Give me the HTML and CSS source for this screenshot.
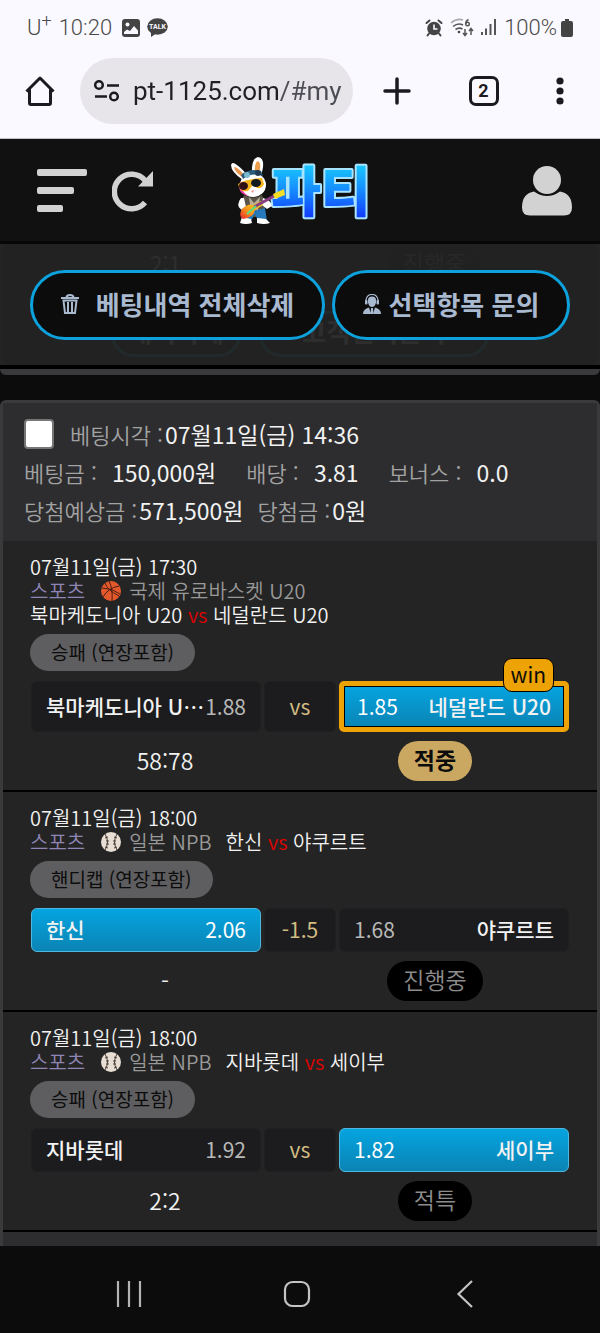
FILE: index.html
```html
<!DOCTYPE html>
<html lang="ko">
<head>
    <meta charset="UTF-8">
    <meta name="viewport" content="width=device-width, initial-scale=1.0">
    <title>파티</title>
    <link rel="stylesheet" href="styles.css">
</head>
<body>
    <div class="status-bar">
        <div class="status-left">
            <span>U<sup>+</sup></span>
            <span>10:20</span>
            <svg class="status-photo" width="18" height="18" viewBox="0 0 18 18"><rect width="18" height="18" rx="3" fill="#444"/><circle cx="5.500" cy="5.500" r="2" fill="#faf9ff"/><path d="M2 15v-2l3-2.500 3 1.500 4-5 4 4.500V15z" fill="#faf9ff"/></svg>
            <svg width="21" height="20" viewBox="0 0 21 20"><ellipse cx="10.500" cy="8.500" rx="10.300" ry="8.200" fill="#444"/><path d="M4 14l0 5 6-4z" fill="#444"/><text x="10.500" y="11" text-anchor="middle" font-size="7" font-weight="bold" font-family="Roboto, sans-serif" fill="#faf9ff">TALK</text></svg>
        </div>
        <div class="status-right">
            <svg width="18" height="18" viewBox="0 0 18 18"><circle cx="9" cy="9.500" r="6.800" fill="#444"/><path d="M1.500 4L4.500 1.500M16.500 4L13.500 1.500M4 14.500l-1.500 2M14 14.500l1.500 2" stroke="#444" stroke-width="2" stroke-linecap="round"/><path d="M9 5.500v4.500h3.500" fill="none" stroke="#faf9ff" stroke-width="1.600"/></svg>
            <svg width="24" height="19" viewBox="0 0 24 19" fill="none" stroke="#555"><path d="M1 5Q7 0 13 2" stroke="#aaa" stroke-width="1.600"/><path d="M3 8.500Q8 4.500 13 7M5.500 11.500Q9 9 12.500 11" stroke-width="1.600"/><circle cx="9" cy="14" r="1.300" fill="#444" stroke="none"/><path d="M18.500 1.500Q15.500 3 15.800 6" stroke-width="1.500"/><circle cx="17.500" cy="6" r="1.800" stroke-width="1.400"/><path d="M15 11v6M13 15l2 2.500 2-2.500M21 17v-6M19 13l2-2.500 2 2.500" stroke-width="1.500"/></svg>
            <svg width="16" height="17" viewBox="0 0 16 17" fill="#555"><rect y="13" width="2" height="3"/><rect x="4" y="9.500" width="2" height="6.500"/><rect x="8.500" y="5" width="2" height="11"/><rect x="13" width="2" height="16"/></svg>
            <span class="battery">100%</span>
            <svg width="12" height="18" viewBox="0 0 12 18"><path d="M4 0h4v2h2a2 2 0 0 1 2 2v12a2 2 0 0 1-2 2H2a2 2 0 0 1-2-2V4a2 2 0 0 1 2-2h2z" fill="#444"/></svg>
        </div>
    </div>

    <div class="browser-bar">
        <button class="icon-button" aria-label="홈"><svg width="30" height="30" viewBox="0 0 30 30" fill="none" stroke="#1b1b1f" stroke-width="3" stroke-linejoin="round"><path d="M1.500 15.500L15 2l13.500 13.500M4.500 13.500V27a1.500 1.500 0 0 0 1.500 1.500h18a1.500 1.500 0 0 0 1.500-1.500V13.500"/></svg></button>
        <div class="address">
            <svg width="26" height="22" viewBox="0 0 26 22" fill="none" stroke="#1b1b1f" stroke-width="2.500"><circle cx="5" cy="5" r="3.800"/><path d="M13 5.500h12M1 16.500h12"/><circle cx="20" cy="16.500" r="3.800"/></svg>
            <input type="text" class="address-input" aria-label="주소" value="pt-1125.com/#my">
        </div>
        <div class="browser-actions">
            <button class="icon-button" aria-label="새 탭"><svg width="28" height="28" viewBox="0 0 28 28" stroke="#1b1b1f" stroke-width="3.500" stroke-linecap="round"><path d="M14 2v24M2 14h24"/></svg></button>
            <button class="tab-count">2</button>
            <button class="icon-button" aria-label="메뉴"><svg width="8" height="28" viewBox="0 0 8 28" fill="#1b1b1f"><circle cx="4" cy="4" r="3.600"/><circle cx="4" cy="14" r="3.600"/><circle cx="4" cy="24" r="3.600"/></svg></button>
        </div>
    </div>

    <header class="site-header">
        <div class="header-left">
            <button class="icon-button" aria-label="전체메뉴"><svg width="50" height="44" viewBox="0 0 50 44" fill="#d2d2d2"><rect width="50" height="7" rx="2"/><rect y="18" width="37" height="7" rx="2"/><rect y="36" width="26" height="7" rx="2"/></svg></button>
            <button class="icon-button" aria-label="새로고침"><svg width="41" height="41" viewBox="0 0 41 41"><path d="M33 9.500A17.300 17.300 0 1 0 33 31.500" fill="none" stroke="#d2d2d2" stroke-width="5.500"/><path d="M41 0v15.500H26z" fill="#d2d2d2"/></svg></button>
        </div>
        <a href="#" class="logo">
            <svg width="142" height="70" viewBox="0 0 142 70">
                <defs>
                    <linearGradient id="logoBlue" x1="0" y1="0" x2="0" y2="1">
                        <stop offset="0.200" stop-color="#19c8ff"/>
                        <stop offset="0.500" stop-color="#1690ff"/>
                        <stop offset="0.850" stop-color="#123ffc"/>
                    </linearGradient>
                    <linearGradient id="guitar" x1="0" y1="1" x2="1" y2="0">
                        <stop offset="0" stop-color="#e7262b"/>
                        <stop offset="0.400" stop-color="#f7931e"/>
                        <stop offset="1" stop-color="#f5ec22"/>
                    </linearGradient>
                </defs>
                <text class="logo-text" x="92" y="56" text-anchor="middle" fill="url(#logoBlue)">파티</text>
                <!-- ears -->
                <path d="M14 24Q2 16 2 9q1-4 6 0 8 6 11 12z" fill="#fff"/>
                <path d="M13 21Q5 15 5 11q4 0 11 9z" fill="#e8954f"/>
                <path d="M23 20Q22 2 29 1q6 1 5 10-1 8-5 12z" fill="#fff"/>
                <path d="M26 19Q25 6 29 5q3 2 2 8-1 5-3 8z" fill="#ee9c4c"/>
                <!-- head -->
                <ellipse cx="24" cy="29" rx="13" ry="12" fill="#fff"/>
                <path d="M12 25Q12 37 20 40q-9-1-10-9z" fill="#ee3fa6"/>
                <path d="M12 19q8-7 20-4l2 5q-11-4-20 3z" fill="#2b5c77"/>
                <circle cx="18" cy="19" r="3" fill="#79b8ce"/><circle cx="29" cy="17" r="3" fill="#223b55"/>
                <path d="M9 28q8-5 24-6l2 6q-2 5-7 4l-4-3-5 6q-8 2-10-7z" fill="#f4b41c"/>
                <ellipse cx="14.500" cy="30" rx="4.500" ry="4" fill="#301014"/><ellipse cx="27" cy="27" rx="5" ry="4" fill="#101820"/>
                <path d="M22 35l3-1-1 3z" fill="#e88"/>
                <!-- body -->
                <path d="M15 39q10 5 18 0l4 9-4 13H15l-4-11z" fill="#5b5548"/>
                <path d="M12 42q-6 8 1 12l4-3-2-9zM34 42q8 2 9 8l-5 3-5-4z" fill="#fff"/>
                <path d="M20 41l5 6 6-6-2 13-7 1z" fill="#bdb09a"/>
                <path d="M15 55l10 0 11-3 2 13H29l-3-7-4 7h-9z" fill="#2679ba"/>
                <path d="M13 61l9 2 1 4q-6 2-12 0zM28 62l9 1 4 4q-6 2-13 0z" fill="#fff"/>
                <!-- guitar -->
                <path d="M13 53q6-6 11-4l8-4 2 4-8 5q-2 8-12 9-5-3-1-10z" fill="url(#guitar)"/>
                <path d="M25 51L47 39" stroke="#8a3b82" stroke-width="3"/>
                <path d="M44 38l11-5 1 6-10 4z" fill="#f6dd25"/>
                <path d="M18 58l9-8" stroke="#58e085" stroke-width="2"/>
            </svg>
        </a>
        <button class="icon-button" aria-label="내 정보"><svg width="50" height="50" viewBox="0 0 50 50" fill="#d2d2d2"><circle cx="25" cy="14" r="14"/><path d="M12 25.500q13 9 26 0 12 2 12 16 0 8-8 8H8q-8 0-8-8 0-14 12-16z"/></svg></button>
    </header>

    <main>
        <div class="sticky-area">
            <div class="bet-card previous">
                <div class="result-row">
                    <span class="score">2:1</span>
                    <span class="result"><span class="badge">진행중</span></span>
                </div>
                <div class="card-buttons">
                    <button class="card-button">내역삭제</button>
                    <button class="card-button wide">고객센터문의</button>
                </div>
            </div>
            <div class="toolbar">
                <button class="tool-button delete-all">
                    <svg width="18" height="20" viewBox="0 0 18 20" fill="none" stroke="#a9b9d0" stroke-width="2"><path d="M0 4h18M5.500 3.500q0-2.500 3.500-2.500t3.500 2.500"/><path d="M2.500 6.500L4 19h10l1.500-12.500zM7 8v10M11 8v10"/></svg>
                    베팅내역 전체삭제
                </button>
                <button class="tool-button">
                    <svg width="18" height="20" viewBox="0 0 18 20" fill="#a9b9d0"><path d="M3 8V6q1-5.500 6-5.500T15 6v2" fill="none" stroke="#a9b9d0" stroke-width="1.200"/><rect x="2" y="6" width="2.500" height="4.500" rx="1"/><rect x="13.500" y="6" width="2.500" height="4.500" rx="1"/><path d="M5 5.500Q5.500 2.500 9 2.500t4 3v3q-1 4.500-4 4.500t-4-4.500z"/><path d="M0 20q0-5 6-6.500l2 6.500zM18 20q0-5-6-6.500L10 20zM8 14h2l.5 6h-3z"/></svg>
                    선택항목 문의
                </button>
            </div>
        </div>

        <section class="bet-card">
            <div class="card-head">
                <div class="head-row">
                    <input type="checkbox" id="bet1" class="bet-check">
                    <label for="bet1">베팅시각 :<b>07월11일(금) 14:36</b></label>
                </div>
                <div class="head-row spaced">
                    <span>베팅금 : <b>150,000원</b></span>
                    <span>배당 : <b>3.81</b></span>
                    <span>보너스 : <b>0.0</b></span>
                </div>
                <div class="head-row totals">
                    <span>당첨예상금 :<b>571,500원</b></span>
                    <span>당첨금 :<b>0원</b></span>
                </div>
            </div>

            <article class="game">
                <div class="game-info">
                    <div>07월11일(금) 17:30</div>
                    <div class="league">
                        <a href="#" class="sport">스포츠</a>
                        <svg width="20" height="20" viewBox="0 0 20 20"><circle cx="10" cy="10" r="10" fill="#e4592b"/><path d="M1 7q10 0 18 6M8 0q4 8 3 20M2 16Q7 7 18 5M4 2q2 7 14 13" fill="none" stroke="#4a1e12"/></svg>
                        <span>국제 유로바스켓 U20</span>
                    </div>
                    <div>북마케도니아 U20 <em>vs</em> 네덜란드 U20</div>
                </div>
                <span class="market">승패 (연장포함)</span>
                <div class="options">
                    <button class="option"><span class="team">북마케도니아 U20</span><span class="odds">1.88</span></button>
                    <div class="option middle">vs</div>
                    <button class="option away selected win"><span class="team">네덜란드 U20</span><span class="odds">1.85</span><span class="win-tag">win</span></button>
                </div>
                <div class="result-row">
                    <span class="score">58:78</span>
                    <span class="result"><span class="badge hit">적중</span></span>
                </div>
            </article>

            <article class="game">
                <div class="game-info">
                    <div>07월11일(금) 18:00</div>
                    <div class="league">
                        <a href="#" class="sport">스포츠</a>
                        <svg width="20" height="20" viewBox="0 0 20 20"><circle cx="10" cy="10" r="10" fill="#e8ded4"/><path d="M4 2q5 8 0 16M16 2q-5 8 0 16" fill="none" stroke="#4a3c38"/><path d="M4 6l3-1M5 9h3M5 12h3M4 15l3 1M16 6l-3-1M15 9h-3M15 12h-3M16 15l-3 1" stroke="#4a3c38"/></svg>
                        <span>일본 NPB</span>
                        <span class="match">한신 <em>vs</em> 야쿠르트</span>
                    </div>
                </div>
                <span class="market">핸디캡 (연장포함)</span>
                <div class="options">
                    <button class="option selected"><span class="team">한신</span><span class="odds">2.06</span></button>
                    <div class="option middle">-1.5</div>
                    <button class="option away"><span class="team">야쿠르트</span><span class="odds">1.68</span></button>
                </div>
                <div class="result-row">
                    <span class="score">-</span>
                    <span class="result"><span class="badge">진행중</span></span>
                </div>
            </article>

            <article class="game">
                <div class="game-info">
                    <div>07월11일(금) 18:00</div>
                    <div class="league">
                        <a href="#" class="sport">스포츠</a>
                        <svg width="20" height="20" viewBox="0 0 20 20"><circle cx="10" cy="10" r="10" fill="#e8ded4"/><path d="M4 2q5 8 0 16M16 2q-5 8 0 16" fill="none" stroke="#4a3c38"/><path d="M4 6l3-1M5 9h3M5 12h3M4 15l3 1M16 6l-3-1M15 9h-3M15 12h-3M16 15l-3 1" stroke="#4a3c38"/></svg>
                        <span>일본 NPB</span>
                        <span class="match">지바롯데 <em>vs</em> 세이부</span>
                    </div>
                </div>
                <span class="market">승패 (연장포함)</span>
                <div class="options">
                    <button class="option"><span class="team">지바롯데</span><span class="odds">1.92</span></button>
                    <div class="option middle">vs</div>
                    <button class="option away selected"><span class="team">세이부</span><span class="odds">1.82</span></button>
                </div>
                <div class="result-row">
                    <span class="score">2:2</span>
                    <span class="result"><span class="badge">적특</span></span>
                </div>
            </article>
            <div class="card-foot"></div>
        </section>
    </main>

    <nav class="phone-nav">
        <button class="icon-button" aria-label="최근 앱"><svg width="26" height="28" viewBox="0 0 26 28" stroke="#b4b4b4" stroke-width="2.200"><path d="M2 1v26M13 1v26M24 1v26"/></svg></button>
        <button class="icon-button" aria-label="홈 화면"><svg width="28" height="28" viewBox="0 0 28 28" fill="none" stroke="#c4c4c4" stroke-width="2.200"><rect x="2" y="2" width="24" height="24" rx="7.500"/></svg></button>
        <button class="icon-button" aria-label="뒤로"><svg width="26" height="28" viewBox="0 0 26 28" fill="none" stroke="#c4c4c4" stroke-width="2.200"><path d="M20 1L6.500 14 20 27"/></svg></button>
    </nav>
</body>
</html>
```

FILE: styles.css
```css
* {
    box-sizing: border-box;
}
body {
    margin: 0;
    background-color: #0c0c0c;
    color: #f2f2f2;
    font-family: "Noto Sans CJK KR", sans-serif;
    font-size: 20px;
    font-weight: 350;
    line-height: 24px;
}
button {
    font: inherit;
    color: inherit;
    cursor: pointer;
}
svg {
    display: block;
    flex: none;
}
.icon-button {
    padding: 0;
    border: none;
    background: none;
}

/* phone status bar */
.status-bar {
    display: flex;
    justify-content: space-between;
    align-items: center;
    height: 55px;
    padding: 0 27px;
    background-color: #faf9ff;
    color: #4a4a4a;
    font-family: Roboto, sans-serif;
    font-size: 22px;
    font-weight: 300;
}
.status-left, .status-right {
    display: flex;
    align-items: center;
    gap: 7px;
}
.battery {
    margin-right: -3px;
}
.status-left sup {
    font-size: 18px;
    line-height: 0;
}
.status-photo {
    margin-left: 3px;
}

/* browser bar */
.browser-bar {
    display: flex;
    align-items: center;
    height: 84px;
    padding: 3px 36px 15px 25px;
    border-bottom: 1px solid #c4c4c8;
    background-color: #faf9ff;
}
.address {
    display: flex;
    flex: 1;
    align-items: center;
    gap: 13px;
    min-width: 0;
    height: 66px;
    margin-left: 25px;
    padding: 0 8px 0 14px;
    border-radius: 33px;
    background-color: #e7e5ea;
}
.address-input {
    flex: 1;
    min-width: 0;
    padding: 0;
    border: none;
    outline: none;
    background: linear-gradient(90deg, #202024 147px, #4c4c54 147px);
    -webkit-background-clip: text;
    background-clip: text;
    -webkit-text-fill-color: transparent;
    font-family: Roboto, sans-serif;
    font-size: 26px;
    line-height: 36px;
}
.browser-actions {
    display: flex;
    flex: none;
    justify-content: space-between;
    align-items: center;
    width: 181px;
    margin-left: 30px;
}
.tab-count {
    width: 30px;
    height: 30px;
    padding: 0;
    border: 3px solid #1b1b1f;
    border-radius: 7px;
    background: none;
    color: #1b1b1f;
    font-family: Roboto, sans-serif;
    font-size: 18px;
    font-weight: bold;
    line-height: 24px;
}

/* site header */
.site-header {
    display: grid;
    grid-template-columns: 1fr auto 1fr;
    align-items: center;
    height: 105px;
    padding: 2px 28px 0;
    border-bottom: 3px solid #060606;
    background-color: #111;
}
.header-left {
    display: flex;
    align-items: center;
    gap: 25px;
    padding-left: 9px;
}
.site-header > .icon-button {
    justify-self: end;
}
.logo-text {
    font-size: 54px;
    font-weight: 900;
    stroke: #a8e4ff;
    stroke-width: 4px;
    stroke-linejoin: round;
    paint-order: stroke;
}

.sticky-area {
    display: grid;
}
.sticky-area > * {
    grid-area: 1 / 1;
}
.toolbar {
    display: flex;
    align-self: start;
    gap: 7px;
    padding: 26px 30px 25px;
    border-bottom: 4px solid #000;
    background-color: rgba(35, 35, 35, 0.95);
}
.tool-button {
    display: flex;
    flex: 1 1 auto;
    justify-content: center;
    align-items: center;
    gap: 8px;
    height: 70px;
    padding: 0 24px 2px;
    border: 3px solid #0da2dd;
    border-radius: 35px;
    background-color: #0c0c0c;
    color: #a9b9d0;
    font-size: 26px;
    font-weight: bold;
    white-space: nowrap;
}
.delete-all {
    gap: 17px;
}
.card-buttons {
    display: flex;
    justify-content: center;
    gap: 18px;
    padding: 27px 0 12px;
}
.card-button {
    height: 46px;
    width: 130px;
    padding: 0 0 6px;
    border: 3px solid #0da2dd;
    border-radius: 23px;
    background-color: #0c0c0c;
    font-size: 26px;
    font-weight: bold;
}
.card-button.wide {
    width: 230px;
}

/* betting card */
.bet-card {
    border: 3px solid #3a3a3c;
    border-radius: 6px;
    background-color: #242424;
}
.previous {
    padding: 0 28px;
    border-top: none;
    border-bottom-width: 6px;
    border-radius: 0 0 6px 6px;
}
section.bet-card {
    margin-top: 25px;
    border-bottom: none;
    border-radius: 6px 6px 0 0;
}
.card-head {
    padding: 12px 21px;
    background-color: #2d2d2f;
    color: #a2a2a2;
    font-size: 22px;
}
.head-row {
    display: flex;
    align-items: center;
    height: 38px;
    white-space: pre;
}
.head-row b {
    margin-left: 2px;
    color: #f2f2f2;
    font-size: 23px;
    font-weight: 400;
}
.spaced {
    gap: 30px;
}
.head-row.spaced b {
    margin-left: 9px;
}
.totals {
    gap: 14px;
}
.bet-check {
    appearance: none;
    width: 30px;
    height: 30px;
    margin: 0 16px 0 0;
    border: 2px solid #767676;
    border-radius: 4px;
    background-color: #fff;
}
.bet-check:checked {
    background-color: #0da2dd;
}
.game {
    padding: 14px 27px 9px;
    border-bottom: 2px solid #000;
}
.game-info {
    margin-bottom: 7px;
}
.game-info em {
    color: #e00000;
    font-style: normal;
}
.league {
    display: flex;
    align-items: center;
    color: #999;
}
.league svg {
    margin: 0 8px 0 16px;
}
.sport {
    color: #8f86b5;
    text-decoration: none;
}
.match {
    margin-left: 14px;
    color: #f2f2f2;
}
.market {
    display: block;
    width: fit-content;
    height: 37px;
    padding: 0 21px;
    border-radius: 19px;
    background-color: #5e5e60;
    color: #0c0c0c;
    font-size: 19px;
    font-weight: 400;
    line-height: 36px;
}
.options {
    display: grid;
    grid-template-columns: 230fr 72fr 230fr;
    gap: 3px;
    margin: 10px 1px 9px;
}
.option {
    position: relative;
    display: flex;
    justify-content: space-between;
    align-items: center;
    min-width: 0;
    min-height: 44px;
    padding: 0 14px 2px;
    border: 1px solid #1f1f21;
    border-radius: 6px;
    background-color: #1c1c1e;
    font-size: 21px;
}
.team {
    overflow: hidden;
    font-weight: 500;
    text-overflow: ellipsis;
    white-space: nowrap;
}
.odds {
    color: #b8b8b8;
    font-weight: 400;
}
.away {
    flex-direction: row-reverse;
}
.middle {
    justify-content: center;
    color: #d2bd82;
    font-weight: 400;
}
.selected {
    border-color: #4fb8e0;
    background: linear-gradient(#05a4e0, #0b84b4);
}
.selected .odds {
    color: #fff;
}
.win {
    min-height: 51px;
    padding: 0 13px 2px;
    border: 5px solid #eda205;
    border-radius: 5px;
    background-clip: padding-box;
    background-color: #000;
    box-shadow: inset 0 0 0 1px #000;
}
.win-tag {
    position: absolute;
    top: -28px;
    right: 10px;
    padding: 3px 7px 5px;
    border: 1px solid #000;
    border-radius: 9px;
    background-color: #eda205;
    color: #0c0c0c;
    font-weight: 400;
}
.result-row {
    display: grid;
    grid-template-columns: 1fr 1fr;
    align-items: center;
    height: 40px;
    font-size: 23px;
    text-align: center;
}
.score {
    padding-bottom: 2px;
}
.badge {
    display: inline-block;
    height: 40px;
    padding: 0 16px;
    border-radius: 20px;
    background-color: #000;
    color: #8c8c8c;
    line-height: 36px;
}
.hit {
    background-color: #cba862;
    color: #0c0c0c;
    font-weight: bold;
}
.card-foot {
    height: 14px;
    background-color: #2d2d2f;
}

/* phone navigation */
.phone-nav {
    display: grid;
    grid-template-columns: repeat(3, 168px);
    justify-content: center;
    height: 87px;
    padding-right: 6px;
    background-color: #0c0c0c;
}
.phone-nav .icon-button {
    display: flex;
    justify-content: center;
    align-items: center;
    padding-top: 8px;
}
```
